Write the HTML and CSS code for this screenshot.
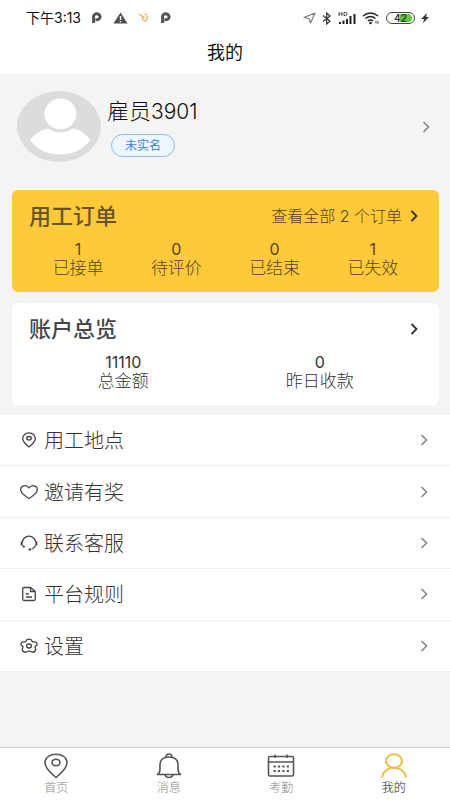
FILE: index.html
```html
<!DOCTYPE html>
<html lang="zh-CN">
<head>
<meta charset="utf-8">
<meta name="viewport" content="width=device-width, initial-scale=1">
<title>我的</title>
<link rel="stylesheet" href="styles.css">
</head>
<body>
<div class="page">
  <div class="status">
    <div class="status-left">
      <span class="time">下午3:13</span>
      <svg width="12" height="12" viewBox="0 0 12 12"><path d="M2.600 11V5.500A3.300 3 0 1 1 6 7.800H4.500" fill="none" stroke="#555" stroke-width="3"/></svg>
      <svg width="15" height="12" viewBox="0 0 15 12"><path d="M7.500.5 14.500 11.500H.5Z" fill="#505050"/><path d="M7.500 4v4M7.500 9v1.300" stroke="#fff" stroke-width="1.400"/></svg>
      <svg width="12" height="12" viewBox="0 0 12 12" fill="none" stroke="#efb062" stroke-width="1.300"><path d="M1 2 4 4 5 8 8 9 10 4M4 4 7 6"/><path d="M7 2l2 1" stroke="#e58b42"/></svg>
      <svg width="12" height="12" viewBox="0 0 12 12"><path d="M2.600 11V5.500A3.300 3 0 1 1 6 7.800H4.500" fill="none" stroke="#555" stroke-width="3"/></svg>
    </div>
    <div class="status-right">
      <svg width="13" height="12" viewBox="0 0 13 12" fill="none" stroke="#777" stroke-width="1.100" stroke-linejoin="round"><path d="M12 1 1 5.500 6 6.500 7.500 11Z"/></svg>
      <svg width="10" height="13" viewBox="0 0 10 13" fill="none" stroke="#333" stroke-width="1.200"><path d="M1 3.500 8 9 4.700 12V1L8 4 1 9.500"/></svg>
      <svg width="18" height="14" viewBox="0 0 18 14" fill="none" stroke="#222"><path d="M1 1v4M4 1v4M1 3h3M6 1.500v3h1.500Q9 4.500 9 3T7.500 1.500Z" stroke-width=".8"/><path d="M2 13v-2M5.500 13V9.500M9 13V8M12.500 13V5M16.500 13V3" stroke-width="2"/></svg>
      <svg width="18" height="14" viewBox="0 0 18 14" fill="none" stroke="#222" stroke-width="1.500"><path d="M1 5Q8.500-1 16 5M3.500 7.500Q8.500 3.500 13.500 7.500M6 10Q8.500 8 11 10"/><circle cx="8.500" cy="12" r=".6"/><path d="M14 9.500v3M16 10v3" stroke-width=".8"/></svg>
      <span class="battery"><span class="battery-level"></span><span class="battery-text">42</span></span>
      <svg width="8" height="12" viewBox="0 0 8 12"><path d="M6 1 0 7h3L2 11 8 5H5Z" fill="#333"/></svg>
    </div>
  </div>
  <header class="title-bar"><h1>我的</h1></header>

  <main class="content">
    <a class="profile" href="#">
      <svg class="avatar" viewBox="0 0 84 70" preserveAspectRatio="none"><ellipse cx="42" cy="35" rx="42" ry="35" fill="#dcdcdc"/><path d="M13 48.500Q19 40 31 37H56Q68 40 73.500 48.500Q62 62.500 43 62.500T13 48.500Z" fill="#fff"/><ellipse cx="43.500" cy="23" rx="18.500" ry="18" fill="#dcdcdc"/><ellipse cx="43.500" cy="22.500" rx="16" ry="15.200" fill="#fff"/></svg>
      <span class="identity">
        <span class="name">雇员<span class="digits">3901</span></span>
        <span class="tag">未实名</span>
      </span>
      <svg class="chevron" viewBox="0 0 8 14"><path d="M1.500 2 6.500 7 1.500 12"/></svg>
    </a>

    <section class="card card-orders">
      <div class="card-head">
        <h2>用工订单</h2>
        <a class="more" href="#">查看全部 2 个订单
          <svg class="chevron" viewBox="0 0 8 14"><path d="M1.500 2 6.500 7 1.500 12"/></svg></a>
      </div>
      <dl class="stats">
        <div><dd>1</dd><dt>已接单</dt></div>
        <div><dd>0</dd><dt>待评价</dt></div>
        <div><dd>0</dd><dt>已结束</dt></div>
        <div><dd>1</dd><dt>已失效</dt></div>
      </dl>
    </section>

    <section class="card card-account">
      <div class="card-head">
        <h2>账户总览</h2>
        <a class="more" href="#" aria-label="账户总览">
          <svg class="chevron" viewBox="0 0 8 14"><path d="M1.500 2 6.500 7 1.500 12"/></svg></a>
      </div>
      <dl class="stats">
        <div><dd>11110</dd><dt>总金额</dt></div>
        <div><dd>0</dd><dt>昨日收款</dt></div>
      </dl>
    </section>

    <nav class="menu">
      <a href="#"><svg class="icon" viewBox="0 0 18 16"><path d="M9 15Q2.700 10 2.700 6.500A6.300 5.700 0 0 1 15.300 6.500Q15.300 10 9 15Z"/><ellipse cx="9" cy="6.300" rx="2.300" ry="1.800"/></svg><span>用工地点</span><svg class="chevron" viewBox="0 0 8 14"><path d="M1.500 2 6.500 7 1.500 12"/></svg></a>
      <a href="#"><svg class="icon" viewBox="0 0 18 16"><path d="M9 14.500Q.7 9.500.7 5.800C.7 1.300 6.500.3 9 4 11.500.3 17.300 1.300 17.300 5.800Q17.300 9.500 9 14.500Z"/></svg><span>邀请有奖</span><svg class="chevron" viewBox="0 0 8 14"><path d="M1.500 2 6.500 7 1.500 12"/></svg></a>
      <a href="#"><svg class="icon" viewBox="0 0 18 16"><path d="M2.500 7A6.500 5.800 0 0 1 15.500 7M15.500 10.500Q14.500 13 11.500 14"/><path d="M1.700 6.500v4M16.300 6.500v4" stroke-width="2"/><path d="M3 10.500 4.500 12.500M8.500 14.500h2.500" stroke-width="1.800"/></svg><span>联系客服</span><svg class="chevron" viewBox="0 0 8 14"><path d="M1.500 2 6.500 7 1.500 12"/></svg></a>
      <a href="#"><svg class="icon" viewBox="0 0 18 16"><path d="M4.200 1.500H10.500L15.300 5.500V13Q15.300 14.500 13.800 14.500H4.200Q2.700 14.500 2.700 13V3Q2.700 1.500 4.200 1.500ZM10.500 1.500V5.500H15.300M6 8h3M6 11h6"/></svg><span>平台规则</span><svg class="chevron" viewBox="0 0 8 14"><path d="M1.500 2 6.500 7 1.500 12"/></svg></a>
      <a href="#"><svg class="icon" viewBox="0 0 18 16"><path d="M6.500 2Q9 .3 11.500 2L12.300 3.800 15 3.900Q17.500 5 17 7L15 8.700 15.700 11.500Q15 14.500 12.300 14.200L9 13 5.700 14.200Q3 14.500 2.300 11.500L3 8.700 1 7Q.5 5 3 3.900L5.700 3.800Z"/><ellipse cx="9" cy="8" rx="2.400" ry="2"/></svg><span>设置</span><svg class="chevron" viewBox="0 0 8 14"><path d="M1.500 2 6.500 7 1.500 12"/></svg></a>
    </nav>
  </main>

  <nav class="tabs">
    <a href="#"><svg viewBox="0 0 28 26"><path d="M14 24.500Q3 15.500 3 9.500C3-1.500 25-1.500 25 9.500Q25 15.500 14 24.500Z"/><ellipse cx="14" cy="9.500" rx="4" ry="3.300"/></svg><span>首页</span></a>
    <a href="#"><svg viewBox="0 0 28 26"><path d="M2.500 21.500Q5 20 5 16V12Q5 4 14 4T23 12V16Q23 20 25.500 21.500ZM11 4Q11 1 14 1T17 4M10 22Q11 24.500 14 24.500T18 22"/></svg><span>消息</span></a>
    <a href="#"><svg viewBox="0 0 28 26"><rect x="1.500" y="3.500" width="25" height="19.500" rx="1.500"/><path d="M1.500 9H26.500M8 1.500V5M20 1.500V5"/><path d="M6.500 13.500H22M6.500 18H22" stroke-width="2.200" stroke-dasharray="2.200 2.200"/></svg><span>考勤</span></a>
    <a href="#" class="active" aria-current="page"><svg viewBox="0 0 28 26"><ellipse cx="14" cy="8" rx="8" ry="6.800"/><path d="M2 24.500Q4 14.800 14 14.800T26 24.500"/></svg><span>我的</span></a>
  </nav>
</div>
</body>
</html>
```
FILE: styles.css
```css
* {
  box-sizing: border-box;
}

body {
  margin: 0;
  background: #f4f4f4;
  color: #333;
  font-family: Inter, "Noto Sans CJK SC", sans-serif;
  font-weight: 300;
}

h1, h2, dl, dd, dt {
  margin: 0;
}

a {
  color: inherit;
  text-decoration: none;
}

svg {
  display: block;
  flex: none;
}

.page {
  display: flex;
  flex-direction: column;
  min-height: 100vh;
}

.status {
  display: flex;
  justify-content: space-between;
  align-items: center;
  height: 36px;
  padding: 0 21px 0 26px;
  background: #fff;
}

.status-left {
  display: flex;
  align-items: center;
  gap: 10px;
}

.time {
  color: #111;
  font-size: 14px;
  font-weight: 400;
  line-height: 20px;
}

.status-right {
  display: flex;
  align-items: center;
  gap: 6px;
}

.battery {
  position: relative;
  width: 29px;
  height: 12px;
  border: 1px solid #444;
  border-radius: 6px;
  font-size: 10px;
  font-weight: 600;
  line-height: 10px;
  text-align: center;
}

.battery-level {
  position: absolute;
  inset: 1px 2px 1px 13px;
  border-radius: 0 4px 4px 0;
  background: #62c83a;
}

.battery-text {
  position: relative;
}

.title-bar {
  padding: 5px 0 9px;
  border-bottom: 1px solid #eee;
  background: #fff;
  text-align: center;
}

.title-bar h1 {
  color: #111;
  font-size: 18px;
  font-weight: 400;
  line-height: 24px;
}

.content {
  flex: 1;
}

.chevron {
  width: 8px;
  height: 14px;
  fill: none;
  stroke: #858585;
  stroke-width: 1.6;
}

.profile {
  display: flex;
  align-items: center;
  gap: 6px;
  padding: 16px 20px 28px 17px;
}

.avatar {
  width: 84px;
  height: 71px;
}

.identity {
  display: flex;
  flex: 1;
  flex-direction: column;
  align-items: flex-start;
  gap: 7px;
}

.name {
  color: #111;
  font-size: 22px;
  line-height: 30px;
}

.digits {
  font-size: 21px;
}

.tag {
  margin-left: 4px;
  padding: 0 13px;
  border: 1px solid #8dbbed;
  border-radius: 12px;
  background: #edf5fd;
  color: #3f82d8;
  font-size: 12px;
  font-weight: 400;
  line-height: 21px;
}

.card {
  margin: 0 11px 11px 12px;
  padding: 13px 17px 15px;
  border-radius: 6px;
  background: #fff;
}

.card-orders {
  background: #ffca3a;
  color: #54451f;
}

.card .chevron {
  margin-right: 4px;
  stroke: #333;
  stroke-width: 1.8;
}

.card-head {
  display: flex;
  justify-content: space-between;
  align-items: center;
}

.card-head h2 {
  color: #46474b;
  font-size: 22px;
  font-weight: 500;
  line-height: 26px;
}

.card-orders h2 {
  color: #66552a;
}

.more {
  display: flex;
  align-items: center;
  gap: 8px;
  font-size: 16px;
  line-height: 26px;
}

.stats {
  display: grid;
  grid-auto-columns: 1fr;
  grid-auto-flow: column;
  margin-top: 10px;
  text-align: center;
}

.stats > div {
  display: flex;
  flex-direction: column;
}

.stats dd {
  font-size: 16px;
  font-weight: 400;
  line-height: 20px;
}

.stats dt {
  font-size: 17px;
  line-height: 18px;
}

.card-account {
  margin-bottom: 10px;
}

.card-account .stats {
  margin-right: 4px;
  margin-left: -4px;
}

.menu {
  display: grid;
  grid-auto-rows: 1fr;
  min-height: 257px;
  background: #fff;
}

.menu a {
  display: flex;
  align-items: center;
  gap: 6px;
  padding: 0 22px 0 20px;
  border-bottom: 1px solid #eee;
  color: #333;
  font-size: 20px;
  line-height: 28px;
}

.menu span {
  flex: 1;
  padding-top: 2px;
}

.icon {
  width: 18px;
  height: 16px;
  fill: none;
  stroke: #444;
  stroke-width: 1.3;
  stroke-linejoin: round;
}

.tabs {
  display: grid;
  grid-template-columns: repeat(4, 1fr);
  border-top: 1px solid #ccc;
  background: #fff;
}

.tabs a {
  display: flex;
  flex-direction: column;
  align-items: center;
  padding: 5px 0 3px;
  color: #888;
  font-size: 12px;
  line-height: 18px;
}

.tabs svg {
  width: 28px;
  height: 26px;
  fill: none;
  stroke: #555;
  stroke-width: 1.6;
  stroke-linejoin: round;
}

.tabs .active {
  color: #222;
}

.tabs .active svg {
  stroke: #edc044;
  stroke-width: 2;
}
```
